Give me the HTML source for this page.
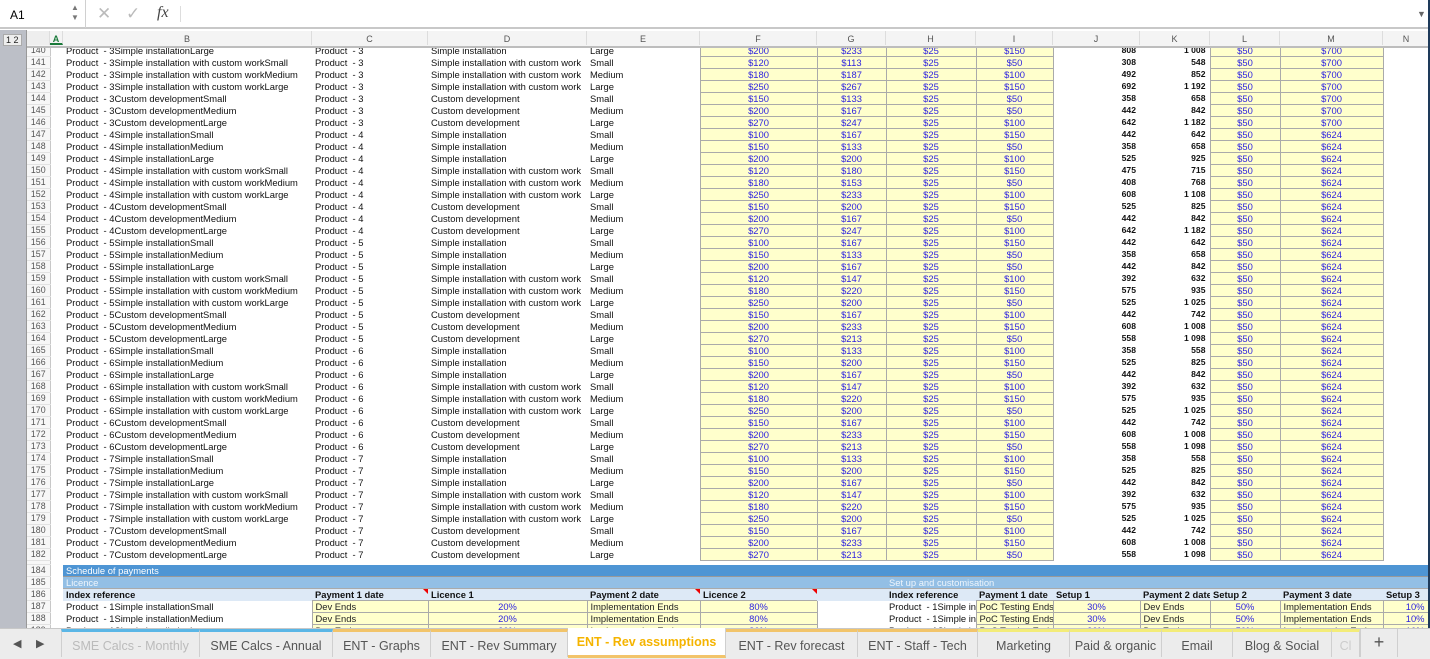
<!DOCTYPE html>
<html><head><meta charset="utf-8"><style>
*{margin:0;padding:0;box-sizing:border-box}
body{width:1430px;height:659px;overflow:hidden;background:#fff;font-family:"Liberation Sans",sans-serif;position:relative}
#fb{position:absolute;left:0;top:0;width:1430px;height:29px;background:#fff;border-bottom:2px solid #c8c8c8}
#nb{position:absolute;left:0;top:0;width:86px;height:28px;border-right:1px solid #d0d0d0;font-size:12px;padding:8px 0 0 10px}
#gut{position:absolute;left:0;top:30px;width:27px;height:598px;background:#bcbfc7;border-right:1px solid #999}
#hdr{position:absolute;left:27px;top:31px;height:17px;width:1403px;background:#f4f4f4;border-bottom:2px solid #bdbdbd;font-size:9px;color:#555}
#hdr span{position:absolute;text-align:center;border-right:1px solid #ddd;height:14px;top:0;padding-top:3px}
#sh{position:absolute;left:27px;top:48px;width:1401px;height:580px;overflow:hidden}
table{border-collapse:collapse;table-layout:fixed;margin-top:-4px;font-size:9.4px;width:1401px}
td,th{height:12px;line-height:11px;white-space:nowrap;overflow:hidden;padding:0 3px;color:#111}
th{font-weight:normal;color:#555;background:#f7f7f7;border-right:1px solid #c8c8c8;border-bottom:1px solid #e2e2e2;text-align:center;font-size:8.8px;padding:0}
.y{background:#ffffcc;border:1px solid #aaa;color:#2a1fe0;text-align:center}
.b{font-weight:bold;text-align:right;padding-right:4px;font-size:8.6px}
.r{text-align:right}
.t1 td{background:#4e95d4;color:#fff;border-bottom:1px solid #999}
.t2 td{background:#93bfe5;color:#eef5fc;border-bottom:1px solid #aaa}
.t3 td{background:#dde9f6;font-weight:bold;position:relative}
.yb{background:#ffffcc;border:1px solid #aaa;color:#222}
.tri{position:absolute;right:0;top:0;width:0;height:0;border-top:5px solid #e00;border-left:5px solid transparent}
#tabs{position:absolute;left:0;top:628px;width:1430px;height:31px;background:#ececec;border-top:1px solid #c8c8c8;font-size:12.5px;color:#555}
.tab{position:absolute;top:0;height:28px;padding-top:7px;text-align:center;border-right:1px solid #cfcfcf}
</style></head><body>
<div id="fb"><div id="nb">A1<span style="position:absolute;left:71px;top:3px;font-size:8px;color:#777;line-height:10px">▲<br>▼</span></div>
<span style="position:absolute;left:97px;top:4px;font-size:17px;color:#bbb">✕</span>
<span style="position:absolute;left:126px;top:4px;font-size:17px;color:#bbb">✓</span>
<span style="position:absolute;left:157px;top:4px;font-size:16px;font-style:italic;font-family:'Liberation Serif',serif;color:#444">fx</span>
<span style="position:absolute;left:180px;top:6px;width:1px;height:16px;background:#ddd"></span>
<span style="position:absolute;left:1417px;top:9px;font-size:9px;color:#666">▼</span></div>
<div id="gut"></div>
<div style="position:absolute;left:3px;top:34px;font-size:9px;color:#222;background:#eee;padding:0 2px;border:1px solid #aaa;line-height:10px">1 2</div>
<div id="hdr">
<span style="left:0;width:23px;background:#eee"></span>
<span style="left:23px;width:13px;color:#1a7a3a;font-weight:bold;border-bottom:2px solid #1a7a3a">A</span>
<span style="left:36px;width:249px">B</span><span style="left:285px;width:116px">C</span><span style="left:401px;width:159px">D</span><span style="left:560px;width:113px">E</span><span style="left:673px;width:117px">F</span><span style="left:790px;width:69px">G</span><span style="left:859px;width:90px">H</span><span style="left:949px;width:77px">I</span><span style="left:1026px;width:87px">J</span><span style="left:1113px;width:70px">K</span><span style="left:1183px;width:70px">L</span><span style="left:1253px;width:103px">M</span><span style="left:1356px;width:47px">N</span>
</div>
<div id="sh"><table>
<colgroup><col style="width:23px"><col style="width:13px"><col style="width:249px"><col style="width:116px"><col style="width:159px"><col style="width:113px"><col style="width:117px"><col style="width:69px"><col style="width:90px"><col style="width:77px"><col style="width:87px"><col style="width:70px"><col style="width:70px"><col style="width:103px"><col style="width:45px"></colgroup>
<tr><th>140</th><td></td><td>Product&nbsp; - 3Simple installationLarge</td><td>Product&nbsp; - 3</td><td>Simple installation</td><td>Large</td><td class=y>$200</td><td class=y>$233</td><td class=y>$25</td><td class=y>$150</td><td class=b>808</td><td class=b>1 008</td><td class=y>$50</td><td class=y>$700</td><td></td></tr>
<tr><th>141</th><td></td><td>Product&nbsp; - 3Simple installation with custom workSmall</td><td>Product&nbsp; - 3</td><td>Simple installation with custom work</td><td>Small</td><td class=y>$120</td><td class=y>$113</td><td class=y>$25</td><td class=y>$50</td><td class=b>308</td><td class=b>548</td><td class=y>$50</td><td class=y>$700</td><td></td></tr>
<tr><th>142</th><td></td><td>Product&nbsp; - 3Simple installation with custom workMedium</td><td>Product&nbsp; - 3</td><td>Simple installation with custom work</td><td>Medium</td><td class=y>$180</td><td class=y>$187</td><td class=y>$25</td><td class=y>$100</td><td class=b>492</td><td class=b>852</td><td class=y>$50</td><td class=y>$700</td><td></td></tr>
<tr><th>143</th><td></td><td>Product&nbsp; - 3Simple installation with custom workLarge</td><td>Product&nbsp; - 3</td><td>Simple installation with custom work</td><td>Large</td><td class=y>$250</td><td class=y>$267</td><td class=y>$25</td><td class=y>$150</td><td class=b>692</td><td class=b>1 192</td><td class=y>$50</td><td class=y>$700</td><td></td></tr>
<tr><th>144</th><td></td><td>Product&nbsp; - 3Custom developmentSmall</td><td>Product&nbsp; - 3</td><td>Custom development</td><td>Small</td><td class=y>$150</td><td class=y>$133</td><td class=y>$25</td><td class=y>$50</td><td class=b>358</td><td class=b>658</td><td class=y>$50</td><td class=y>$700</td><td></td></tr>
<tr><th>145</th><td></td><td>Product&nbsp; - 3Custom developmentMedium</td><td>Product&nbsp; - 3</td><td>Custom development</td><td>Medium</td><td class=y>$200</td><td class=y>$167</td><td class=y>$25</td><td class=y>$50</td><td class=b>442</td><td class=b>842</td><td class=y>$50</td><td class=y>$700</td><td></td></tr>
<tr><th>146</th><td></td><td>Product&nbsp; - 3Custom developmentLarge</td><td>Product&nbsp; - 3</td><td>Custom development</td><td>Large</td><td class=y>$270</td><td class=y>$247</td><td class=y>$25</td><td class=y>$100</td><td class=b>642</td><td class=b>1 182</td><td class=y>$50</td><td class=y>$700</td><td></td></tr>
<tr><th>147</th><td></td><td>Product&nbsp; - 4Simple installationSmall</td><td>Product&nbsp; - 4</td><td>Simple installation</td><td>Small</td><td class=y>$100</td><td class=y>$167</td><td class=y>$25</td><td class=y>$150</td><td class=b>442</td><td class=b>642</td><td class=y>$50</td><td class=y>$624</td><td></td></tr>
<tr><th>148</th><td></td><td>Product&nbsp; - 4Simple installationMedium</td><td>Product&nbsp; - 4</td><td>Simple installation</td><td>Medium</td><td class=y>$150</td><td class=y>$133</td><td class=y>$25</td><td class=y>$50</td><td class=b>358</td><td class=b>658</td><td class=y>$50</td><td class=y>$624</td><td></td></tr>
<tr><th>149</th><td></td><td>Product&nbsp; - 4Simple installationLarge</td><td>Product&nbsp; - 4</td><td>Simple installation</td><td>Large</td><td class=y>$200</td><td class=y>$200</td><td class=y>$25</td><td class=y>$100</td><td class=b>525</td><td class=b>925</td><td class=y>$50</td><td class=y>$624</td><td></td></tr>
<tr><th>150</th><td></td><td>Product&nbsp; - 4Simple installation with custom workSmall</td><td>Product&nbsp; - 4</td><td>Simple installation with custom work</td><td>Small</td><td class=y>$120</td><td class=y>$180</td><td class=y>$25</td><td class=y>$150</td><td class=b>475</td><td class=b>715</td><td class=y>$50</td><td class=y>$624</td><td></td></tr>
<tr><th>151</th><td></td><td>Product&nbsp; - 4Simple installation with custom workMedium</td><td>Product&nbsp; - 4</td><td>Simple installation with custom work</td><td>Medium</td><td class=y>$180</td><td class=y>$153</td><td class=y>$25</td><td class=y>$50</td><td class=b>408</td><td class=b>768</td><td class=y>$50</td><td class=y>$624</td><td></td></tr>
<tr><th>152</th><td></td><td>Product&nbsp; - 4Simple installation with custom workLarge</td><td>Product&nbsp; - 4</td><td>Simple installation with custom work</td><td>Large</td><td class=y>$250</td><td class=y>$233</td><td class=y>$25</td><td class=y>$100</td><td class=b>608</td><td class=b>1 108</td><td class=y>$50</td><td class=y>$624</td><td></td></tr>
<tr><th>153</th><td></td><td>Product&nbsp; - 4Custom developmentSmall</td><td>Product&nbsp; - 4</td><td>Custom development</td><td>Small</td><td class=y>$150</td><td class=y>$200</td><td class=y>$25</td><td class=y>$150</td><td class=b>525</td><td class=b>825</td><td class=y>$50</td><td class=y>$624</td><td></td></tr>
<tr><th>154</th><td></td><td>Product&nbsp; - 4Custom developmentMedium</td><td>Product&nbsp; - 4</td><td>Custom development</td><td>Medium</td><td class=y>$200</td><td class=y>$167</td><td class=y>$25</td><td class=y>$50</td><td class=b>442</td><td class=b>842</td><td class=y>$50</td><td class=y>$624</td><td></td></tr>
<tr><th>155</th><td></td><td>Product&nbsp; - 4Custom developmentLarge</td><td>Product&nbsp; - 4</td><td>Custom development</td><td>Large</td><td class=y>$270</td><td class=y>$247</td><td class=y>$25</td><td class=y>$100</td><td class=b>642</td><td class=b>1 182</td><td class=y>$50</td><td class=y>$624</td><td></td></tr>
<tr><th>156</th><td></td><td>Product&nbsp; - 5Simple installationSmall</td><td>Product&nbsp; - 5</td><td>Simple installation</td><td>Small</td><td class=y>$100</td><td class=y>$167</td><td class=y>$25</td><td class=y>$150</td><td class=b>442</td><td class=b>642</td><td class=y>$50</td><td class=y>$624</td><td></td></tr>
<tr><th>157</th><td></td><td>Product&nbsp; - 5Simple installationMedium</td><td>Product&nbsp; - 5</td><td>Simple installation</td><td>Medium</td><td class=y>$150</td><td class=y>$133</td><td class=y>$25</td><td class=y>$50</td><td class=b>358</td><td class=b>658</td><td class=y>$50</td><td class=y>$624</td><td></td></tr>
<tr><th>158</th><td></td><td>Product&nbsp; - 5Simple installationLarge</td><td>Product&nbsp; - 5</td><td>Simple installation</td><td>Large</td><td class=y>$200</td><td class=y>$167</td><td class=y>$25</td><td class=y>$50</td><td class=b>442</td><td class=b>842</td><td class=y>$50</td><td class=y>$624</td><td></td></tr>
<tr><th>159</th><td></td><td>Product&nbsp; - 5Simple installation with custom workSmall</td><td>Product&nbsp; - 5</td><td>Simple installation with custom work</td><td>Small</td><td class=y>$120</td><td class=y>$147</td><td class=y>$25</td><td class=y>$100</td><td class=b>392</td><td class=b>632</td><td class=y>$50</td><td class=y>$624</td><td></td></tr>
<tr><th>160</th><td></td><td>Product&nbsp; - 5Simple installation with custom workMedium</td><td>Product&nbsp; - 5</td><td>Simple installation with custom work</td><td>Medium</td><td class=y>$180</td><td class=y>$220</td><td class=y>$25</td><td class=y>$150</td><td class=b>575</td><td class=b>935</td><td class=y>$50</td><td class=y>$624</td><td></td></tr>
<tr><th>161</th><td></td><td>Product&nbsp; - 5Simple installation with custom workLarge</td><td>Product&nbsp; - 5</td><td>Simple installation with custom work</td><td>Large</td><td class=y>$250</td><td class=y>$200</td><td class=y>$25</td><td class=y>$50</td><td class=b>525</td><td class=b>1 025</td><td class=y>$50</td><td class=y>$624</td><td></td></tr>
<tr><th>162</th><td></td><td>Product&nbsp; - 5Custom developmentSmall</td><td>Product&nbsp; - 5</td><td>Custom development</td><td>Small</td><td class=y>$150</td><td class=y>$167</td><td class=y>$25</td><td class=y>$100</td><td class=b>442</td><td class=b>742</td><td class=y>$50</td><td class=y>$624</td><td></td></tr>
<tr><th>163</th><td></td><td>Product&nbsp; - 5Custom developmentMedium</td><td>Product&nbsp; - 5</td><td>Custom development</td><td>Medium</td><td class=y>$200</td><td class=y>$233</td><td class=y>$25</td><td class=y>$150</td><td class=b>608</td><td class=b>1 008</td><td class=y>$50</td><td class=y>$624</td><td></td></tr>
<tr><th>164</th><td></td><td>Product&nbsp; - 5Custom developmentLarge</td><td>Product&nbsp; - 5</td><td>Custom development</td><td>Large</td><td class=y>$270</td><td class=y>$213</td><td class=y>$25</td><td class=y>$50</td><td class=b>558</td><td class=b>1 098</td><td class=y>$50</td><td class=y>$624</td><td></td></tr>
<tr><th>165</th><td></td><td>Product&nbsp; - 6Simple installationSmall</td><td>Product&nbsp; - 6</td><td>Simple installation</td><td>Small</td><td class=y>$100</td><td class=y>$133</td><td class=y>$25</td><td class=y>$100</td><td class=b>358</td><td class=b>558</td><td class=y>$50</td><td class=y>$624</td><td></td></tr>
<tr><th>166</th><td></td><td>Product&nbsp; - 6Simple installationMedium</td><td>Product&nbsp; - 6</td><td>Simple installation</td><td>Medium</td><td class=y>$150</td><td class=y>$200</td><td class=y>$25</td><td class=y>$150</td><td class=b>525</td><td class=b>825</td><td class=y>$50</td><td class=y>$624</td><td></td></tr>
<tr><th>167</th><td></td><td>Product&nbsp; - 6Simple installationLarge</td><td>Product&nbsp; - 6</td><td>Simple installation</td><td>Large</td><td class=y>$200</td><td class=y>$167</td><td class=y>$25</td><td class=y>$50</td><td class=b>442</td><td class=b>842</td><td class=y>$50</td><td class=y>$624</td><td></td></tr>
<tr><th>168</th><td></td><td>Product&nbsp; - 6Simple installation with custom workSmall</td><td>Product&nbsp; - 6</td><td>Simple installation with custom work</td><td>Small</td><td class=y>$120</td><td class=y>$147</td><td class=y>$25</td><td class=y>$100</td><td class=b>392</td><td class=b>632</td><td class=y>$50</td><td class=y>$624</td><td></td></tr>
<tr><th>169</th><td></td><td>Product&nbsp; - 6Simple installation with custom workMedium</td><td>Product&nbsp; - 6</td><td>Simple installation with custom work</td><td>Medium</td><td class=y>$180</td><td class=y>$220</td><td class=y>$25</td><td class=y>$150</td><td class=b>575</td><td class=b>935</td><td class=y>$50</td><td class=y>$624</td><td></td></tr>
<tr><th>170</th><td></td><td>Product&nbsp; - 6Simple installation with custom workLarge</td><td>Product&nbsp; - 6</td><td>Simple installation with custom work</td><td>Large</td><td class=y>$250</td><td class=y>$200</td><td class=y>$25</td><td class=y>$50</td><td class=b>525</td><td class=b>1 025</td><td class=y>$50</td><td class=y>$624</td><td></td></tr>
<tr><th>171</th><td></td><td>Product&nbsp; - 6Custom developmentSmall</td><td>Product&nbsp; - 6</td><td>Custom development</td><td>Small</td><td class=y>$150</td><td class=y>$167</td><td class=y>$25</td><td class=y>$100</td><td class=b>442</td><td class=b>742</td><td class=y>$50</td><td class=y>$624</td><td></td></tr>
<tr><th>172</th><td></td><td>Product&nbsp; - 6Custom developmentMedium</td><td>Product&nbsp; - 6</td><td>Custom development</td><td>Medium</td><td class=y>$200</td><td class=y>$233</td><td class=y>$25</td><td class=y>$150</td><td class=b>608</td><td class=b>1 008</td><td class=y>$50</td><td class=y>$624</td><td></td></tr>
<tr><th>173</th><td></td><td>Product&nbsp; - 6Custom developmentLarge</td><td>Product&nbsp; - 6</td><td>Custom development</td><td>Large</td><td class=y>$270</td><td class=y>$213</td><td class=y>$25</td><td class=y>$50</td><td class=b>558</td><td class=b>1 098</td><td class=y>$50</td><td class=y>$624</td><td></td></tr>
<tr><th>174</th><td></td><td>Product&nbsp; - 7Simple installationSmall</td><td>Product&nbsp; - 7</td><td>Simple installation</td><td>Small</td><td class=y>$100</td><td class=y>$133</td><td class=y>$25</td><td class=y>$100</td><td class=b>358</td><td class=b>558</td><td class=y>$50</td><td class=y>$624</td><td></td></tr>
<tr><th>175</th><td></td><td>Product&nbsp; - 7Simple installationMedium</td><td>Product&nbsp; - 7</td><td>Simple installation</td><td>Medium</td><td class=y>$150</td><td class=y>$200</td><td class=y>$25</td><td class=y>$150</td><td class=b>525</td><td class=b>825</td><td class=y>$50</td><td class=y>$624</td><td></td></tr>
<tr><th>176</th><td></td><td>Product&nbsp; - 7Simple installationLarge</td><td>Product&nbsp; - 7</td><td>Simple installation</td><td>Large</td><td class=y>$200</td><td class=y>$167</td><td class=y>$25</td><td class=y>$50</td><td class=b>442</td><td class=b>842</td><td class=y>$50</td><td class=y>$624</td><td></td></tr>
<tr><th>177</th><td></td><td>Product&nbsp; - 7Simple installation with custom workSmall</td><td>Product&nbsp; - 7</td><td>Simple installation with custom work</td><td>Small</td><td class=y>$120</td><td class=y>$147</td><td class=y>$25</td><td class=y>$100</td><td class=b>392</td><td class=b>632</td><td class=y>$50</td><td class=y>$624</td><td></td></tr>
<tr><th>178</th><td></td><td>Product&nbsp; - 7Simple installation with custom workMedium</td><td>Product&nbsp; - 7</td><td>Simple installation with custom work</td><td>Medium</td><td class=y>$180</td><td class=y>$220</td><td class=y>$25</td><td class=y>$150</td><td class=b>575</td><td class=b>935</td><td class=y>$50</td><td class=y>$624</td><td></td></tr>
<tr><th>179</th><td></td><td>Product&nbsp; - 7Simple installation with custom workLarge</td><td>Product&nbsp; - 7</td><td>Simple installation with custom work</td><td>Large</td><td class=y>$250</td><td class=y>$200</td><td class=y>$25</td><td class=y>$50</td><td class=b>525</td><td class=b>1 025</td><td class=y>$50</td><td class=y>$624</td><td></td></tr>
<tr><th>180</th><td></td><td>Product&nbsp; - 7Custom developmentSmall</td><td>Product&nbsp; - 7</td><td>Custom development</td><td>Small</td><td class=y>$150</td><td class=y>$167</td><td class=y>$25</td><td class=y>$100</td><td class=b>442</td><td class=b>742</td><td class=y>$50</td><td class=y>$624</td><td></td></tr>
<tr><th>181</th><td></td><td>Product&nbsp; - 7Custom developmentMedium</td><td>Product&nbsp; - 7</td><td>Custom development</td><td>Medium</td><td class=y>$200</td><td class=y>$233</td><td class=y>$25</td><td class=y>$150</td><td class=b>608</td><td class=b>1 008</td><td class=y>$50</td><td class=y>$624</td><td></td></tr>
<tr><th>182</th><td></td><td>Product&nbsp; - 7Custom developmentLarge</td><td>Product&nbsp; - 7</td><td>Custom development</td><td>Large</td><td class=y>$270</td><td class=y>$213</td><td class=y>$25</td><td class=y>$50</td><td class=b>558</td><td class=b>1 098</td><td class=y>$50</td><td class=y>$624</td><td></td></tr>
<tr><th style="height:4px;line-height:4px"></th><td colspan=14 style="height:4px;line-height:4px"></td></tr>
<tr class=t1><th style="background:#f7f7f7;color:#555">184</th><td style="background:#fff;border:0"></td><td colspan=13>Schedule of payments</td></tr>
<tr class=t2><th style="background:#f7f7f7;color:#555">185</th><td style="background:#fff;border:0"></td><td colspan=6>Licence</td><td colspan=7>Set up and customisation</td></tr>
<tr class=t3><th style="background:#f7f7f7;color:#555;font-weight:normal">186</th><td style="background:#fff"></td><td>Index reference</td><td>Payment 1 date<span class=tri></span></td><td>Licence 1</td><td>Payment 2 date<span class=tri></span></td><td>Licence 2<span class=tri></span></td><td></td><td>Index reference</td><td>Payment 1 date</td><td>Setup 1</td><td>Payment 2 date</td><td>Setup 2</td><td>Payment 3 date</td><td>Setup 3</td></tr>
<tr><th>187</th><td></td><td>Product&nbsp; - 1Simple installationSmall</td><td class=yb>Dev Ends</td><td class=y>20%</td><td class=yb>Implementation Ends</td><td class=y>80%</td><td></td><td>Product&nbsp; - 1Simple installationSmall</td><td class=yb>PoC Testing Ends</td><td class=y>30%</td><td class=yb>Dev Ends</td><td class=y>50%</td><td class=yb>Implementation Ends</td><td class="y r">10%</td></tr>
<tr><th>188</th><td></td><td>Product&nbsp; - 1Simple installationMedium</td><td class=yb>Dev Ends</td><td class=y>20%</td><td class=yb>Implementation Ends</td><td class=y>80%</td><td></td><td>Product&nbsp; - 1Simple installationMedium</td><td class=yb>PoC Testing Ends</td><td class=y>30%</td><td class=yb>Dev Ends</td><td class=y>50%</td><td class=yb>Implementation Ends</td><td class="y r">10%</td></tr>
<tr><th>189</th><td></td><td>Product&nbsp; - 1Simple installationLarge</td><td class=yb>Dev Ends</td><td class=y>20%</td><td class=yb>Implementation Ends</td><td class=y>80%</td><td></td><td>Product&nbsp; - 1Simple installationLarge</td><td class=yb>PoC Testing Ends</td><td class=y>30%</td><td class=yb>Dev Ends</td><td class=y>50%</td><td class=yb>Implementation Ends</td><td class="y r">10%</td></tr>
</table></div>
<div style="position:absolute;left:1428px;top:0;width:2px;height:659px;background:#1e3a5a"></div>
<div id="tabs">
<span style="position:absolute;left:13px;top:8px;font-size:11px;color:#555">◀</span><span style="position:absolute;left:36px;top:8px;font-size:11px;color:#555">▶</span>
<div class=tab style="left:61px;width:139px;color:#bbb;border-top:3px solid #5ab6e6;border-left:1px solid #cfcfcf">SME Calcs - Monthly</div>
<div class=tab style="left:200px;width:133px;border-top:3px solid #5ab6e6">SME Calcs - Annual</div>
<div class=tab style="left:333px;width:98px;border-top:3px solid #f2c46a">ENT - Graphs</div>
<div class=tab style="left:431px;width:137px;border-top:3px solid #f2c46a">ENT - Rev Summary</div>
<div class=tab style="left:568px;width:158px;background:#fff;color:#f5b400;font-weight:bold;border-bottom:3px solid #f2c46a;top:-1px;height:30px">ENT - Rev assumptions</div>
<div class=tab style="left:726px;width:132px;border-top:3px solid #f2c46a">ENT - Rev forecast</div>
<div class=tab style="left:858px;width:120px;border-top:3px solid #f2c46a">ENT - Staff - Tech</div>
<div class=tab style="left:978px;width:92px;border-top:3px solid #f3ec78">Marketing</div>
<div class=tab style="left:1070px;width:92px;border-top:3px solid #f3ec78">Paid &amp; organic</div>
<div class=tab style="left:1162px;width:71px;border-top:3px solid #f3ec78">Email</div>
<div class=tab style="left:1233px;width:99px;border-top:3px solid #f3ec78">Blog &amp; Social</div>
<div class=tab style="left:1332px;width:28px;color:#ccc;border-top:3px solid #f3ec78">Cl</div>
<div class=tab style="left:1360px;width:38px;font-size:18px;padding-top:3px;border-left:1px solid #cfcfcf">+</div>
</div>
</body></html>
